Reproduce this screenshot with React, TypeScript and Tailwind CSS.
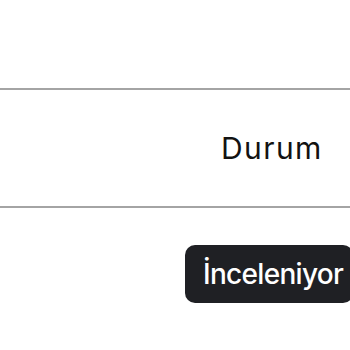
export default function App() {
  return (
    <div className="w-[350px] h-[350px] overflow-hidden bg-white font-['Inter','Liberation_Sans',sans-serif]">
      <div className="h-[88px]" />
      <div className="h-[120px] border-y-2 border-[#a4a4a4] flex items-center pl-[221px] whitespace-nowrap">
        <span className="text-[30px] leading-none text-[#121212] tracking-[1.4px]">Durum</span>
      </div>
      <div className="pt-[37px] pl-[185px] flex">
        <span className="shrink-0 h-[58px] rounded-[10px] bg-[#1f2024] pl-[18px] pr-[10px] flex items-center whitespace-nowrap text-[28px] leading-none font-medium text-white tracking-[-0.7px]">
          İnceleniyor
        </span>
      </div>
    </div>
  );
}
